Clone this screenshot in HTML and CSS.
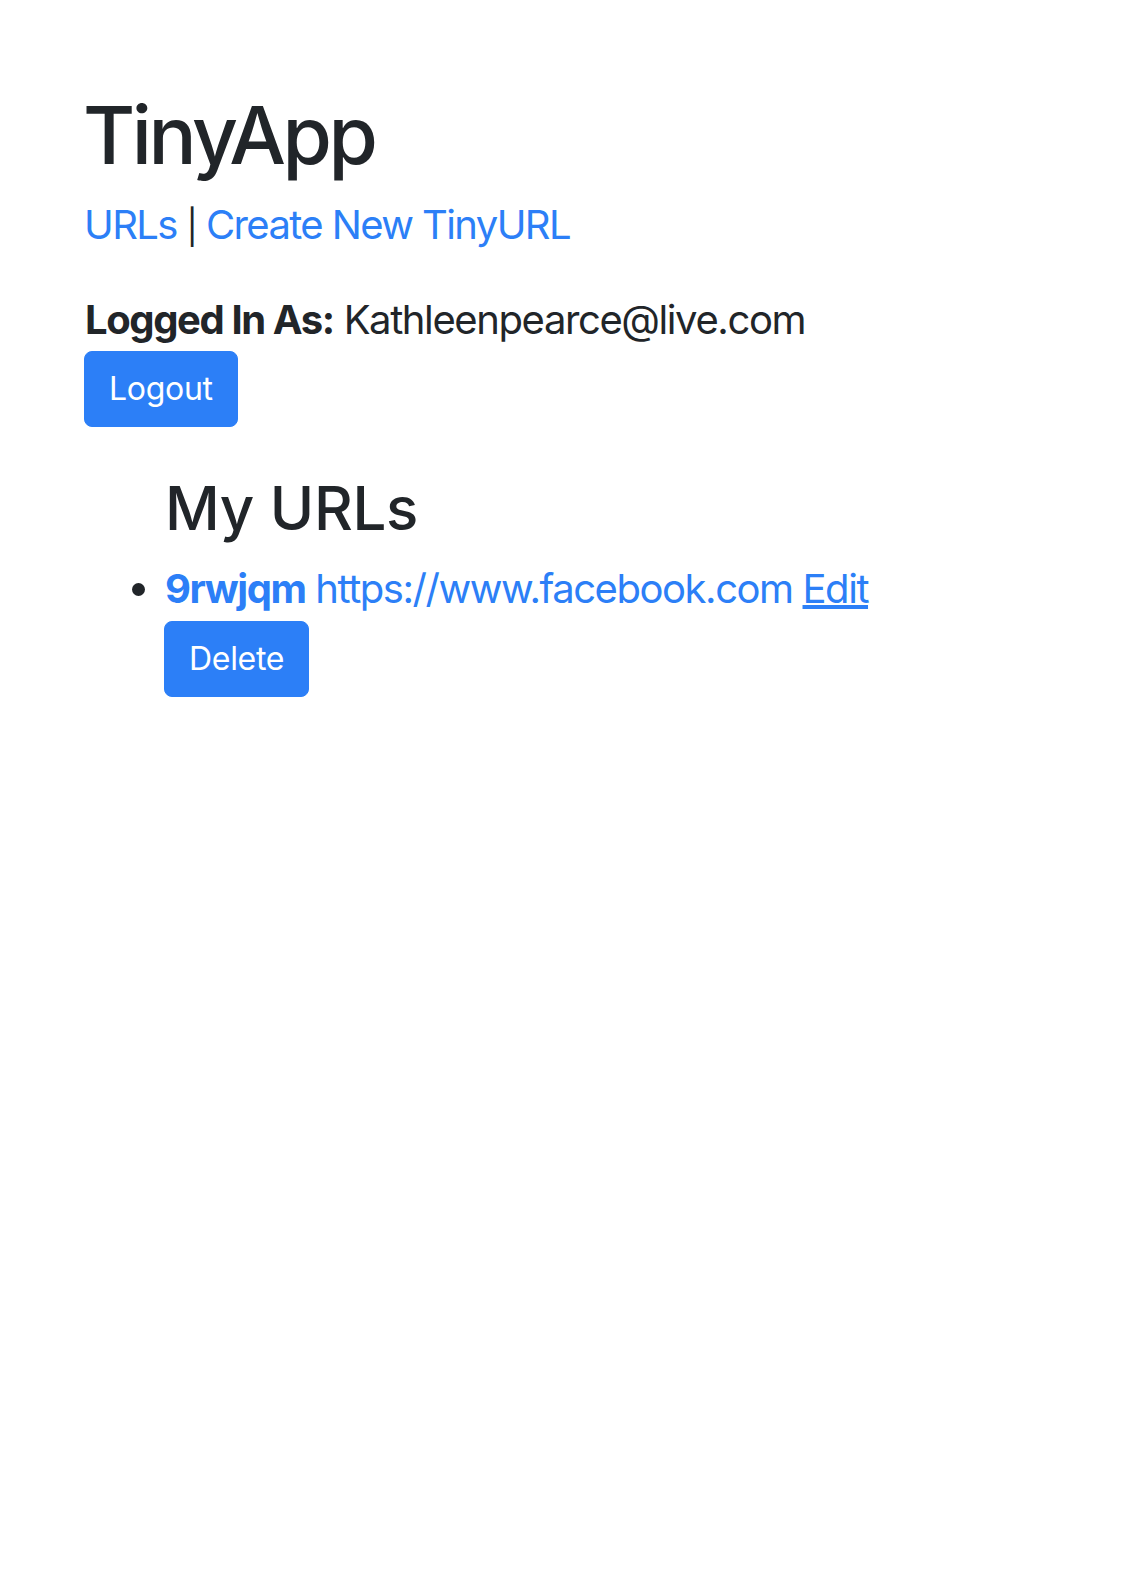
FILE: index.html
```html
<!DOCTYPE html>
<html lang="en">
<head>
<meta charset="utf-8">
<title>TinyApp</title>
<link rel="stylesheet" href="styles.css">
</head>
<body>
<div class="page">
  <h1 class="title">TinyApp</h1>
  <nav class="nav"><a href="#">URLs</a> <span class="sep">|</span> <a href="#">Create New TinyURL</a></nav>
  <div class="login"><b>Logged In As:</b> Kathleenpearce@live.com</div>
  <button class="btn">Logout</button>
  <section class="urls">
    <h2 class="urls-title">My URLs</h2>
    <ul class="url-list">
      <li class="url-item">
        <div class="url-line"><a class="short" href="#">9rwjqm</a> <a href="#">https://www.facebook.com</a> <a class="edit" href="#">Edit</a></div>
        <button class="btn btn-delete">Delete</button>
      </li>
    </ul>
  </section>
</div>
</body>
</html>
```
FILE: styles.css
```css
html, body {
  margin: 0;
  padding: 0;
  background: #ffffff;
}
body {
  font-family: Inter, "Noto Sans", "Liberation Sans", sans-serif;
  color: #212529;
}
.page {
  padding: 87px 0 0 85px;
}
.title {
  margin: 0 0 18px -2px;
  font-size: 80px;
  line-height: 96px;
  font-weight: 500;
  letter-spacing: -3.4px;
}
a {
  color: #2c7ff7;
  text-decoration: none;
}
.nav {
  font-size: 40px;
  line-height: 48px;
  margin-bottom: 45px;
  margin-left: -1px;
  letter-spacing: -1.6px;
}
.sep {
  font-size: 34px;
}
.login {
  font-size: 40px;
  line-height: 48px;
  letter-spacing: -1.4px;
}
.login b {
  font-weight: 700;
}
.btn {
  display: block;
  margin-top: 7px;
  font-family: inherit;
  font-size: 32px;
  line-height: 48px;
  letter-spacing: -0.3px;
  padding: 13px 24px;
  border: 1px solid #2c7ff7;
  border-radius: 8px;
  background: #2c7ff7;
  color: #ffffff;
  margin-left: -1px;
}
.urls {
  padding-left: 80px;
  margin-top: 45px;
}
.urls-title {
  margin: 0 0 21px 0;
  font-size: 60px;
  line-height: 72px;
  font-weight: 500;
  letter-spacing: -0.3px;
}
.url-list {
  margin: 0;
  padding: 0;
  list-style: disc outside;
}
.url-item {
  font-size: 40px;
  line-height: 48px;
  letter-spacing: -1.45px;
}
.short {
  font-weight: 700;
}
.edit {
  text-decoration: underline;
}
.btn-delete {
  margin-top: 8px;
}
```
